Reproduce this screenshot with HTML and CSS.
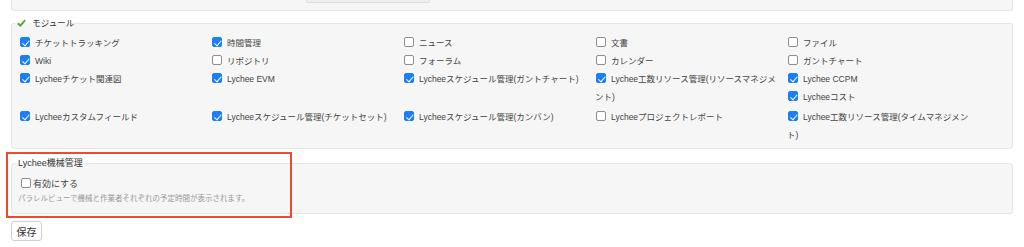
FILE: index.html
```html
<!DOCTYPE html>
<html lang="ja">
<head>
  <meta charset="UTF-8" />
  <meta name="viewport" content="width=device-width, initial-scale=1.0" />
  <title>プロジェクト設定 - モジュール</title>
  <link rel="stylesheet" href="styles.css">
</head>
<body>
  <div class="content">
    <div class="prev-box">
      <div class="prev-field"></div>
    </div>

    <fieldset class="box modules">
      <legend class="modules-legend">
        <svg class="ok-icon" width="9" height="8" viewBox="0 0 9 8"><path d="M0.8 4.2 L3.3 6.7 L8.2 1.2" fill="none" stroke="#5da83d" stroke-width="2"/></svg>
        モジュール
      </legend>
      <label class="module"><input type="checkbox" checked>チケットトラッキング</label>
      <label class="module"><input type="checkbox" checked>時間管理</label>
      <label class="module"><input type="checkbox">ニュース</label>
      <label class="module"><input type="checkbox">文書</label>
      <label class="module"><input type="checkbox">ファイル</label>
      <label class="module"><input type="checkbox" checked>Wiki</label>
      <label class="module"><input type="checkbox">リポジトリ</label>
      <label class="module"><input type="checkbox">フォーラム</label>
      <label class="module"><input type="checkbox">カレンダー</label>
      <label class="module"><input type="checkbox">ガントチャート</label>
      <label class="module"><input type="checkbox" checked>Lycheeチケット関連図</label>
      <label class="module"><input type="checkbox" checked>Lychee EVM</label>
      <label class="module"><input type="checkbox" checked>Lycheeスケジュール管理(ガントチャート)</label>
      <label class="module spaced"><input type="checkbox" checked>Lychee工数リソース管理(リソースマネジメント)</label>
      <label class="module"><input type="checkbox" checked>Lychee CCPM</label>
      <label class="module spaced"><input type="checkbox" checked>Lycheeコスト</label>
      <label class="module"><input type="checkbox" checked>Lycheeカスタムフィールド</label>
      <label class="module"><input type="checkbox" checked>Lycheeスケジュール管理(チケットセット)</label>
      <label class="module"><input type="checkbox" checked>Lycheeスケジュール管理(カンバン)</label>
      <label class="module"><input type="checkbox">Lycheeプロジェクトレポート</label>
      <label class="module"><input type="checkbox" checked>Lychee工数リソース管理(タイムマネジメント)</label>
    </fieldset>

    <div class="machine-wrap">
      <fieldset class="box machine">
        <legend>Lychee機械管理</legend>
        <label class="enable"><input type="checkbox">有効にする</label>
        <p class="hint">パラレルビューで機械と作業者それぞれの予定時間が表示されます。</p>
      </fieldset>
      <div class="highlight"></div>
    </div>

    <button class="save">保存</button>
  </div>
</body>
</html>
```

FILE: styles.css
```css
* {
  box-sizing: border-box;
}
body {
  margin: 0;
  background: #fff;
  color: #444;
  font-family: "Liberation Sans", "Noto Sans CJK JP", sans-serif;
  font-size: 8.5px;
}
.content {
  padding: 0 11px;
}
.prev-box {
  height: 11px;
  background: #f6f6f6;
  border: 1px solid #e6e6e6;
  border-top: none;
  border-radius: 0 0 3px 3px;
}
.prev-field {
  margin-left: 294px;
  width: 124px;
  height: 3px;
  background: #efefed;
  border: 1px solid #deded9;
  border-top: none;
  border-radius: 0 0 2px 2px;
}
.box {
  margin: 0;
  background: #f6f6f6;
  border: 1px solid #e6e6e6;
  border-radius: 3px;
  min-width: 0;
}
.box legend {
  padding: 0 2px;
  margin-left: -4px;
  line-height: 12px;
  color: #333;
}
.modules {
  margin-top: 6px;
  padding: 5px 7px 4px 7px;
}
.ok-icon {
  vertical-align: -1px;
  margin-right: 4px;
}
.module {
  float: left;
  width: 184px;
  margin-right: 8px;
  line-height: 18px;
}
.module.spaced {
  padding-bottom: 2px;
}
input[type="checkbox"] {
  appearance: none;
  -webkit-appearance: none;
  position: relative;
  width: 10px;
  height: 10px;
  margin: 0 5px 0 1px;
  vertical-align: -1px;
  border: 1px solid #8d8d8d;
  border-radius: 2px;
  background: #fff;
}
input[type="checkbox"]:checked {
  background: #1b7ff5;
  border-color: #1b7ff5;
}
input[type="checkbox"]:checked::after {
  content: "";
  position: absolute;
  left: 2.5px;
  top: 0.5px;
  width: 3px;
  height: 5.5px;
  border: solid #fff;
  border-width: 0 1.6px 1.6px 0;
  transform: rotate(40deg);
}
.machine-wrap {
  position: relative;
  margin-top: 8px;
}
.machine {
  padding: 6px 7px 8px 6px;
}
.machine legend {
  margin-left: -2px;
  font-size: 9px;
}
.enable {
  display: block;
  line-height: 18px;
  font-size: 9px;
}
.enable input[type="checkbox"] {
  margin: 0 2px 0 3px;
}
.hint {
  margin: 0;
  line-height: 12px;
  font-size: 7.5px;
  color: #999;
}
.highlight {
  position: absolute;
  left: -5px;
  top: -5px;
  width: 286px;
  height: 66px;
  border: 2px solid #ef4a2c;
}
.save {
  margin-top: 7px;
  width: 31px;
  height: 20px;
  padding: 0;
  font-family: "Liberation Sans", "Noto Sans CJK JP", sans-serif;
  font-size: 10px;
  color: #333;
  background: #fff;
  border: 1px solid #cfcfcf;
  border-radius: 3px;
}
```
